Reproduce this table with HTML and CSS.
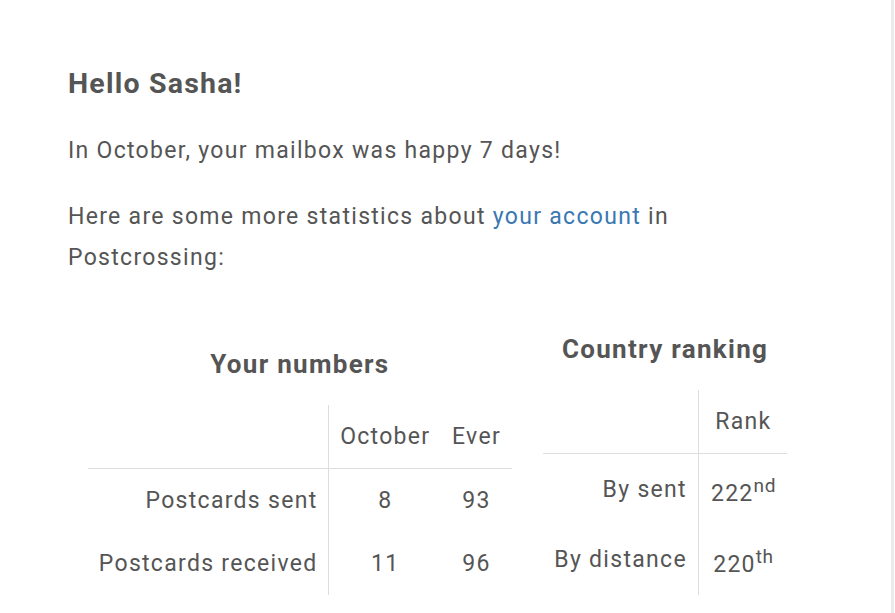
FILE: index.html
```html
<!DOCTYPE html>
<html lang="en">
<head>
<meta charset="utf-8">
<title>Postcrossing monthly stats</title>
<link rel="stylesheet" href="styles.css">
</head>
<body>
<div class="page">
  <main class="mail">
    <h1 class="greeting">Hello Sasha!</h1>
    <p class="text">In October, your mailbox was happy 7 days!</p>
    <p class="text">Here are some more statistics about <a class="link" href="#">your account</a> in<br>Postcrossing:</p>
    <div class="stats">
      <section class="stat-block">
        <h2 class="stat-title">Your numbers</h2>
        <table class="stat-table stat-table--numbers">
          <thead>
            <tr><th class="label"></th><th>October</th><th>Ever</th></tr>
          </thead>
          <tbody>
            <tr><th class="label">Postcards sent</th><td>8</td><td>93</td></tr>
            <tr><th class="label">Postcards received</th><td>11</td><td>96</td></tr>
          </tbody>
        </table>
      </section>
      <section class="stat-block">
        <h2 class="stat-title">Country ranking</h2>
        <table class="stat-table stat-table--ranking">
          <thead>
            <tr><th class="label"></th><th>Rank</th></tr>
          </thead>
          <tbody>
            <tr><th class="label">By sent</th><td>222<sup>nd</sup></td></tr>
            <tr><th class="label">By distance</th><td>220<sup>th</sup></td></tr>
          </tbody>
        </table>
      </section>
    </div>
  </main>
</div>
</body>
</html>
```

FILE: styles.css
```css
html, body {
  margin: 0;
  padding: 0;
  background: #ffffff;
}

body {
  font-family: Roboto, "Liberation Sans", Arial, sans-serif;
  color: #555555;
}

.page {
  width: 891px;
  height: 613px;
  border-right: 3px solid #ebebeb;
  overflow: hidden;
}

.mail {
  width: 760px;
  padding: 63px 0 0 68px;
}

.greeting {
  margin: 0;
  font-size: 28.5px;
  line-height: 41px;
  font-weight: 700;
  letter-spacing: 1.2px;
}

.text {
  margin: 25.5px 0 0;
  font-size: 23px;
  line-height: 41px;
  letter-spacing: 1.3px;
}

.link {
  color: #3a78b2;
  text-decoration: none;
}

.stats {
  display: flex;
  align-items: flex-end;
  gap: 31px;
  margin: 51px 0 0 20px;
}

.stat-block {
  display: flex;
  flex-direction: column;
  align-items: center;
  flex: none;
}

.stat-title {
  margin: 0 0 20px;
  font-size: 26px;
  line-height: 41px;
  font-weight: 700;
  letter-spacing: 1.3px;
}

.stat-table {
  border-collapse: collapse;
  font-size: 23px;
  line-height: 41px;
  letter-spacing: 1.3px;
}

.stat-table th,
.stat-table td {
  padding: 11px 11.5px;
  font-weight: 400;
  text-align: center;
  vertical-align: middle;
}

.stat-table--numbers th,
.stat-table--numbers td {
  padding-left: 10.8px;
  padding-right: 10.8px;
}

.stat-table thead th {
  border-bottom: 1px solid #dddddd;
}

.stat-table .label {
  text-align: right;
  border-right: 1px solid #dddddd;
}

.stat-table sup {
  font-size: 0.83em;
  letter-spacing: 0.5px;
}
```
